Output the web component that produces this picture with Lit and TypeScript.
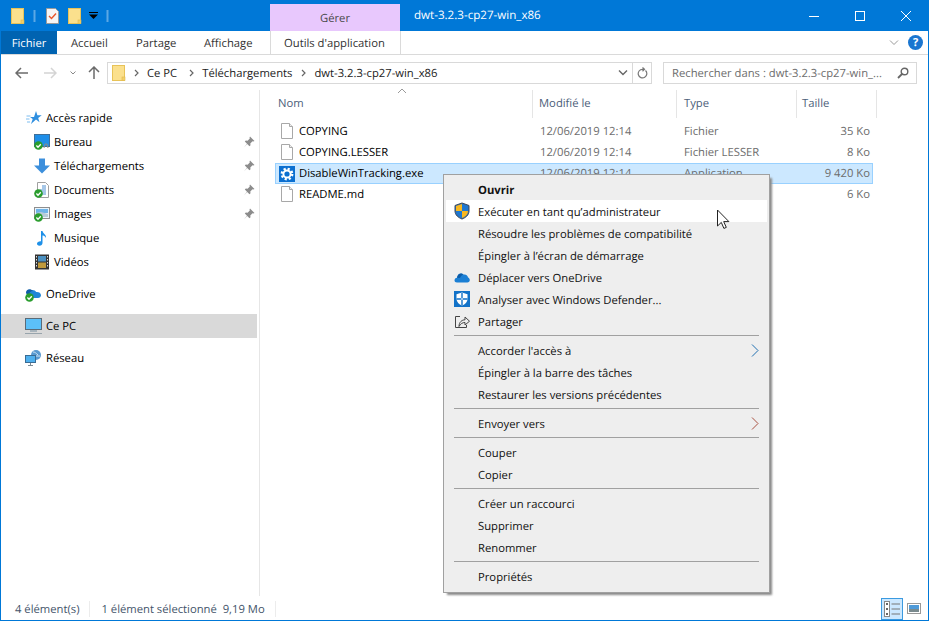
import { LitElement, css, html, nothing, svg } from "lit";
import { customElement } from "lit/decorators.js";

const folder = html`<svg width="14" height="16" viewBox="0 0 14 16">
  <rect x="0.5" y="0.5" width="12" height="15" fill="#fbe08d" stroke="#e8c358"></rect>
  <rect x="10" y="12" width="3" height="3.5" fill="#f3d06a" stroke="#e0b94c" stroke-width="0.6"></rect>
</svg>`;

const checkBadge = svg`<circle cx="4.5" cy="11.5" r="4.3" fill="#2a9d2e"></circle>
  <path d="M2.4 11.5l1.6 1.7 2.8-3" fill="none" stroke="#fff" stroke-width="1.3"></path>`;

const pageIcon = html`<svg width="16" height="18" viewBox="0 0 16 18">
  <path d="M2.5 0.5h8l3 3v12h-11z" fill="#fff" stroke="#a8a8a8"></path>
  <path d="M10.5 0.5v3h3" fill="#eee" stroke="#a8a8a8"></path>
</svg>`;

const gearIcon = html`<svg width="16" height="16" viewBox="0 0 16 16">
  <rect width="16" height="16" fill="#0b6fd0"></rect>
  <circle cx="8" cy="8" r="5.2" fill="none" stroke="#fff" stroke-width="2.4" stroke-dasharray="2.1 1.99"></circle>
  <circle cx="8" cy="8" r="3.6" fill="none" stroke="#fff" stroke-width="2"></circle>
</svg>`;

const pin = html`<svg width="12" height="12" viewBox="0 0 12 12">
  <path d="M7 0.5l4.5 4.5-1.2.6-0.8-.3-2.2 2.2.2 1.8-1 1-2.3-2.4-3.4 3.6 3.2-3.8-2.2-2.2 1-1 1.8.2 2.2-2.2-.3-.8z" fill="#8c8c8c"></path>
</svg>`;

const navIcons: Record<string, unknown> = {
  star: html`<svg width="16" height="16" viewBox="0 0 16 16">
    <path d="M10 1l1.4 4.2 4.3.1-3.5 2.6 1.3 4.3L10 9.6 5 14l1.7-5L4 7l4 0z" fill="#2f8fe0"></path>
    <path d="M0.5 6h4M0 9h3.5M1 12h3" stroke="#7dbdf0"></path>
  </svg>`,
  desktop: html`<svg width="16" height="16" viewBox="0 0 16 16">
    <rect x="0.5" y="0.5" width="15" height="12" fill="#1e8ee8" stroke="#3f6f98"></rect>
    <path d="M10 14l1-4h2l1 4" fill="none" stroke="#8a8a8a"></path>
    ${checkBadge}
  </svg>`,
  download: html`<svg width="16" height="16" viewBox="0 0 16 16">
    <path d="M5 0.5h6v7h5L8 15.5 0 7.500h5z" fill="#3c8fdc"></path>
  </svg>`,
  docs: html`<svg width="16" height="16" viewBox="0 0 16 16">
    <path d="M3.500 0.500h8l3 3v12h-11z" fill="#fff" stroke="#a0a0a0"></path>
    <path d="M8 4h4M8 6h4M6 8h6M8 10h4M8 12h4" stroke="#4f8fd0"></path>
    ${checkBadge}
  </svg>`,
  images: html`<svg width="16" height="16" viewBox="0 0 16 16">
    <rect x="0.500" y="1.500" width="15" height="11" fill="#eaf4fb" stroke="#8e8e8e"></rect>
    <rect x="2" y="3" width="12" height="4" fill="#6fb4e8"></rect>
    <path d="M2 7l5-1 7 2v3H2z" fill="#b8cbd8"></path>
    ${checkBadge}
  </svg>`,
  music: html`<svg width="16" height="16" viewBox="0 0 16 16">
    <path d="M7 1h1.500c.5 3 4 3.500 3.500 7-1-2-2.500-2.500-3.500-2.500V13c0 1.500-1.300 2.700-3 2.700S3 14.800 3 13.500 4.800 11 7 11.200z" fill="#1e90e8"></path>
  </svg>`,
  video: html`<svg width="16" height="16" viewBox="0 0 16 16">
    <rect x="1" y="0.500" width="14" height="15" fill="#333"></rect>
    <rect x="4" y="2" width="8" height="5.500" fill="#4a8fc0"></rect>
    <rect x="4" y="8.500" width="8" height="5.500" fill="#c09a3c"></rect>
    <path d="M2.500 2v12M13.500 2v12" stroke="#ddd" stroke-dasharray="1.500 1.500"></path>
  </svg>`,
  onedrive: html`<svg width="17" height="16" viewBox="0 0 17 16">
    <path d="M3 9c0-3 2-5 4.500-5 1.700 0 3 .8 3.700 2 2.500-.3 4.800 1 4.800 3.200 0 1.600-1.300 2.800-3 2.800H5C3.500 12 3 10.500 3 9z" fill="#1f86d8"></path>
    <path d="M1 6.500C1 4 3.500 2.500 6 3.500l2 1.500C5.500 5 4.500 6.500 4 8.500H2C1.300 8 1 7.300 1 6.500z" fill="#0f5da8"></path>
    ${checkBadge}
  </svg>`,
  pc: html`<svg width="17" height="16" viewBox="0 0 17 16">
    <rect x="0.500" y="0.500" width="16" height="11" fill="#5cc0f8" stroke="#5a6b78"></rect>
    <path d="M5 13h7" stroke="#a8b4bc" stroke-width="2"></path>
    <path d="M0 15.500h17" stroke="#98a4ac"></path>
  </svg>`,
  network: html`<svg width="17" height="16" viewBox="0 0 17 16">
    <circle cx="11" cy="5" r="5" fill="#5a9ad0"></circle>
    <path d="M8 2c2 0 3 1 5 3M7 6h8" stroke="#cfe4f4" fill="none"></path>
    <rect x="0.500" y="5.500" width="10" height="7" fill="#4fb0ee" stroke="#3a6c94"></rect>
    <path d="M5.500 13v2M3 15.500h5" stroke="#7c8a94"></path>
  </svg>`
};

const uacShield = html`<svg width="18" height="18" viewBox="0 0 18 18">
  <path d="M9 1l7 2.500V9c0 4-3.500 6.800-7 8-3.500-1.200-7-4-7-8V3.500z" fill="#2f6fb8" stroke="#3b4a5e"></path>
  <path d="M9 2v7H3V4zM9 9h6c0 3.500-3 6-6 7z" fill="#f8b820"></path>
  <path d="M9 2l6 2v5H9zM9 9v7c-3-1-6-3.500-6-7z" fill="#1f78d0"></path>
</svg>`;

const cloudIcon = html`<svg width="16" height="12" viewBox="0 0 16 12">
  <path d="M0.500 9.500C0.500 8 1.500 7 3 6.800 3.500 3 7 1.500 9.500 3.500 12 3 14 4.500 14 6.500c1 .3 1.800 1.300 1.800 2.500 0 1.500-1 2.500-2.500 2.500H3c-1.500 0-2.500-.8-2.500-2z" fill="#1b7fd4"></path>
  <path d="M3 6.800C3.500 3 7 1.500 9.500 3.500 7.500 4 6.500 5.500 6 7z" fill="#0c5ca8"></path>
</svg>`;

const defenderIcon = html`<svg width="16" height="16" viewBox="0 0 16 16">
  <rect width="16" height="16" fill="#1272c8"></rect>
  <path d="M8 1.500l5.500 1.800V8c0 3-2.500 5.300-5.500 6.500C5 13.300 2.500 11 2.500 8V3.300z" fill="#fff"></path>
  <path d="M7.300 2v12.300h1.400V2zM2.500 7.300h11v1.400h-11z" fill="#1272c8"></path>
</svg>`;

const shareIcon = html`<svg width="16" height="16" viewBox="0 0 16 16">
  <path d="M5 13.500C5 9 8 6.800 11 6.800V4l4.500 4.200L11 12V9.500c-2.500 0-4.500 1.200-6 4z" fill="none" stroke="#444"></path>
  <path d="M6 3.500H1.500v11h11V12" fill="none" stroke="#444"></path>
</svg>`;

type NavRow = { label: string; icon: string; sub?: boolean; pin?: boolean; gap?: boolean; selected?: boolean };

const navRows: NavRow[] = [
  { label: "Accès rapide", icon: "star" },
  { label: "Bureau", icon: "desktop", sub: true, pin: true },
  { label: "Téléchargements", icon: "download", sub: true, pin: true },
  { label: "Documents", icon: "docs", sub: true, pin: true },
  { label: "Images", icon: "images", sub: true, pin: true },
  { label: "Musique", icon: "music", sub: true },
  { label: "Vidéos", icon: "video", sub: true },
  { label: "OneDrive", icon: "onedrive", gap: true },
  { label: "Ce PC", icon: "pc", gap: true, selected: true },
  { label: "Réseau", icon: "network", gap: true }
];

const files = [
  { name: "COPYING", date: "12/06/2019 12:14", type: "Fichier", size: "35 Ko" },
  { name: "COPYING.LESSER", date: "12/06/2019 12:14", type: "Fichier LESSER", size: "8 Ko" },
  { name: "DisableWinTracking.exe", date: "12/06/2019 12:14", type: "Application", size: "9 420 Ko", selected: true },
  { name: "README.md", date: "", type: "", size: "6 Ko" }
];

type MenuEntry = { label?: string; icon?: unknown; bold?: boolean; hot?: boolean; arrow?: string };

const menu: MenuEntry[] = [
  { label: "Ouvrir", bold: true },
  { label: "Exécuter en tant qu’administrateur", icon: uacShield, hot: true },
  { label: "Résoudre les problèmes de compatibilité" },
  { label: "Épingler à l’écran de démarrage" },
  { label: "Déplacer vers OneDrive", icon: cloudIcon },
  { label: "Analyser avec Windows Defender...", icon: defenderIcon },
  { label: "Partager", icon: shareIcon },
  {},
  { label: "Accorder l'accès à", arrow: "#1f6fb0" },
  { label: "Épingler à la barre des tâches" },
  { label: "Restaurer les versions précédentes" },
  {},
  { label: "Envoyer vers", arrow: "#a85040" },
  {},
  { label: "Couper" },
  { label: "Copier" },
  {},
  { label: "Créer un raccourci" },
  { label: "Supprimer" },
  { label: "Renommer" },
  {},
  { label: "Propriétés" }
];

@customElement("app-root")
export class AppRoot extends LitElement {
  static styles = css`
    :host {
      display: block;
      position: relative;
      box-sizing: border-box;
      width: 929px;
      height: 621px;
      overflow: hidden;
      background: #fff;
      border: 1px solid #0078d7;
      border-top: 0;
      font-family: "Open Sans", "Noto Sans", sans-serif;
      font-size: 11.25px;
      text-rendering: geometricPrecision;
      color: #000;
    }
    svg { display: block; flex: none; }
    .t { padding-top: 2px; }

    .title {
      display: flex;
      align-items: flex-start;
      height: 31px;
      margin: 0 -1px;
      background: #0078d7;
      color: #fff;
    }
    .quick { display: flex; align-items: center; width: 270px; height: 31px; padding-left: 11px; box-sizing: border-box; }
    .qsep { width: 1px; height: 12px; margin: 0 10px 0 8px; background: #5aa9e6; border: 1px solid #2f8fdd; border-width: 0 1px; }
    .qsep.last { margin: 0 0 0 8px; }
    .doc { margin-right: 9px; }
    .drop { margin-left: 7px; }
    .manage {
      width: 130px;
      height: 27px;
      margin-top: 4px;
      background: #e8c8fd;
      color: #4a4a4a;
      text-align: center;
      line-height: 30px;
      box-sizing: border-box;
    }
    .wintitle { flex: 1; padding-left: 14px; font-size: 11.6px; line-height: 31px; }
    .controls { display: flex; width: 138px; height: 31px; align-items: center; }
    .controls span { display: flex; justify-content: center; width: 46px; }

    .tabs {
      display: flex;
      align-items: center;
      height: 23px;
      border-bottom: 1px solid #dadada;
      color: #333;
    }
    .fichier {
      width: 56px;
      height: 23px;
      background: #0063b1;
      color: #fff;
      line-height: 25px;
      text-align: center;
    }
    .tab { padding-left: 14px; line-height: 25px; height: 23px; }
    .tab.accueil { width: 51px; }
    .tab.partage { width: 54px; }
    .tab.affichage { width: 66px; }
    .tool {
      width: 131px;
      height: 23px;
      box-sizing: border-box;
      padding-left: 13px;
      line-height: 25px;
      border: 1px solid #dadada;
      border-width: 0 1px;
    }
    .tabend { flex: 1; }
    .tabicons { display: flex; align-items: center; gap: 9px; padding-right: 5px; }
    .help {
      width: 15px;
      height: 15px;
      border-radius: 50%;
      background: #1a76d0;
      color: #fff;
      font-size: 11px;
      font-weight: 700;
      line-height: 15px;
      text-align: center;
    }

    .addr { display: flex; align-items: center; height: 35px; }
    .nav-btns { display: flex; align-items: center; width: 106px; padding-left: 14px; box-sizing: border-box; }
    .fwd { margin-left: 16px; }
    .hist { margin-left: 13px; }
    .up { margin-left: 12px; }
    .pathfolder { margin-left: 4px; }
    .pathbox {
      display: flex;
      align-items: center;
      box-sizing: border-box;
      width: 545px;
      height: 22px;
      border: 1px solid #d9d9d9;
      color: #222;
    }
    .crumbs { display: flex; flex: 1; align-items: center; }
    .crumb { display: flex; align-items: center; gap: 8px; padding-left: 9px; }
    .crumb:first-child { padding-left: 8px; }
    .crumb:nth-child(2) { padding-left: 12px; }
    .pathbtn { display: flex; align-items: center; justify-content: center; width: 18px; height: 20px; }
    .pathbtn.refresh { border-left: 1px solid #d9d9d9; }
    .searchbox {
      display: flex;
      align-items: center;
      justify-content: space-between;
      box-sizing: border-box;
      width: 254px;
      height: 22px;
      margin-left: 11px;
      padding: 0 7px 0 8px;
      border: 1px solid #d9d9d9;
      color: #6d6d6d;
    }

    .body { display: flex; height: 506px; }
    .nav { width: 258px; padding-top: 16px; border-right: 1px solid #e6e6e6; flex: none; }
    .nrow { display: flex; align-items: center; height: 24px; margin-right: 2px; padding-left: 24px; }
    .nrow.sub { padding-left: 32px; }
    .nrow.gap { margin-top: 8px; }
    .nrow.selected { background: #d9d9d9; }
    .nicon { display: flex; justify-content: center; width: 17px; margin-right: 4px; }
    .nlabel { flex: 1; }
    .npin { margin-right: 2px; }

    .main { flex: 1; padding-left: 15px; }
    .cols { display: grid; grid-template-columns: 258px 144px 120px 80px; height: 24px; position: relative; }
    .cols div { border-right: 1px solid #e5e5e5; color: #4c607a; padding-left: 3px; line-height: 28px; }
    .cols div + div { padding-left: 5px; }
    .cols div:nth-child(2) { padding-left: 6px; }
    .cols div:nth-child(3) { padding-left: 7px; }
    .sort { position: absolute; left: 122px; top: -2px; }
    .rows { padding-top: 7px; width: 598px; }
    .frow {
      display: grid;
      grid-template-columns: 258px 150px 112px 1fr;
      align-items: center;
      box-sizing: border-box;
      height: 21px;
      border: 1px solid transparent;
      color: #6d6d6d;
    }
    .frow.selected { background: #cce8ff; border-color: #99d1ff; }
    .fname { display: flex; align-items: center; gap: 4px; padding-left: 3px; color: #000; }
    .fdate { padding-left: 6px; }
    .fsize { text-align: right; padding-right: 2px; }

    .status {
      display: flex;
      align-items: center;
      height: 23px;
      margin-top: 1px;
      color: #44546a;
    }
    .sitem { padding: 0 10px 0 11px; height: 16px; line-height: 17px; border-right: 1px solid #ececec; }
    .sitem:first-child { padding-left: 14px; }
    .sspan { flex: 1; }
    .views { display: flex; align-items: center; padding-right: 3px; }
    .view { display: flex; align-items: center; justify-content: center; width: 22px; height: 22px; box-sizing: border-box; }
    .view.on { background: #cce8ff; border: 1px solid #3b9ae0; }

    .menu {
      position: absolute;
      left: 442px;
      top: 174px;
      width: 327px;
      box-sizing: border-box;
      padding: 3px 2px 5px;
      background: #eeeeee;
      border: 1px solid #a0a0a0;
      box-shadow: 3px 3px 2px -1px #8a8a8a;
      color: #111;
    }
    .mi { display: flex; align-items: center; height: 22px; }
    .mi.hot { background: #fff; }
    .mi.bold { font-weight: 700; }
    .micon { display: flex; align-items: center; justify-content: center; width: 16px; margin: 0 8px; }
    .mlabel { flex: 1; padding-top: 2px; }
    .marrow { margin-right: 8px; }
    .msep { height: 7px; display: flex; align-items: center; padding: 0 8px; }
    .msep i { display: block; flex: 1; height: 1px; background: #a0a0a0; }
    .cursor { position: absolute; left: 715px; top: 209px; }
  `;

  private renderNavRow(row: NavRow) {
    const cls = ["nrow", row.sub ? "sub" : "", row.gap ? "gap" : "", row.selected ? "selected" : ""].join(" ");
    return html`<div class=${cls}>
      <span class="nicon">${navIcons[row.icon]}</span>
      <span class="nlabel">${row.label}</span>
      ${row.pin ? html`<span class="npin">${pin}</span>` : nothing}
    </div>`;
  }

  private renderMenuEntry(entry: MenuEntry) {
    if (!entry.label) {
      return html`<div class="msep"><i></i></div>`;
    }
    const cls = `mi ${entry.bold ? "bold" : ""} ${entry.hot ? "hot" : ""}`;
    return html`<div class=${cls}>
      <span class="micon">${entry.icon ?? nothing}</span>
      <span class="mlabel">${entry.label}</span>
      ${entry.arrow
        ? html`<svg class="marrow" width="8" height="13" viewBox="0 0 8 13"><path d="M1 0.500l6 6-6 6" fill="none" stroke=${entry.arrow}></path></svg>`
        : nothing}
    </div>`;
  }

  protected render() {
    const chevron = html`<svg width="5" height="8" viewBox="0 0 5 8"><path d="M1 1l3 3-3 3" fill="none" stroke="#666" stroke-width="1.200"></path></svg>`;
    return html`
      <div class="title">
        <div class="quick">
          ${folder}
          <span class="qsep"></span>
          <svg class="doc" width="13" height="16" viewBox="0 0 13 16">
            <path d="M0.500 0.500h9l3 3v12H0.500z" fill="#f5f5f5" stroke="#9a9a9a"></path>
            <path d="M3 8l2.500 2.500L10 5.500" fill="none" stroke="#e8552a" stroke-width="1.400"></path>
          </svg>
          ${folder}
          <svg class="drop" width="9" height="7" viewBox="0 0 9 7">
            <path d="M0 0h9v1H0zM0 2.500h9L4.500 7z" fill="#000"></path>
          </svg>
          <span class="qsep last"></span>
        </div>
        <div class="manage">Gérer</div>
        <div class="wintitle">dwt-3.2.3-cp27-win_x86</div>
        <div class="controls">
          <span><svg width="10" height="10" viewBox="0 0 10 10"><path d="M0 5.500h10" stroke="#fff"></path></svg></span>
          <span><svg width="10" height="10" viewBox="0 0 10 10"><rect x="0.500" y="0.500" width="9" height="9" fill="none" stroke="#fff"></rect></svg></span>
          <span><svg width="10" height="10" viewBox="0 0 10 10"><path d="M0 0l10 10M10 0L0 10" stroke="#fff"></path></svg></span>
        </div>
      </div>

      <div class="tabs">
        <div class="fichier">Fichier</div>
        <div class="tab accueil">Accueil</div>
        <div class="tab partage">Partage</div>
        <div class="tab affichage">Affichage</div>
        <div class="tool">Outils d'application</div>
        <div class="tabend"></div>
        <div class="tabicons">
          <svg width="10" height="6" viewBox="0 0 10 6"><path d="M1 0.500l4 4 4-4" fill="none" stroke="#999"></path></svg>
          <div class="help">?</div>
        </div>
      </div>

      <div class="addr">
        <div class="nav-btns">
          <svg width="13" height="12" viewBox="0 0 13 12"><path d="M6 1L1 6l5 5M1 6h12" fill="none" stroke="#6b6b6b" stroke-width="1.500"></path></svg>
          <svg class="fwd" width="13" height="12" viewBox="0 0 13 12"><path d="M7 1l5 5-5 5M12 6H0" fill="none" stroke="#d4d4d4" stroke-width="1.500"></path></svg>
          <svg class="hist" width="6" height="4" viewBox="0 0 6 4"><path d="M0.500 0.500L3 3l2.500-2.500" fill="none" stroke="#888"></path></svg>
          <svg class="up" width="12" height="13" viewBox="0 0 12 13"><path d="M1 6l5-5 5 5M6 1v12" fill="none" stroke="#6b6b6b" stroke-width="1.500"></path></svg>
        </div>
        <div class="pathbox">
          <span class="pathfolder">${folder}</span>
          <div class="crumbs">
            <span class="crumb">${chevron}<span class="t">Ce PC</span></span>
            <span class="crumb">${chevron}<span class="t">Téléchargements</span></span>
            <span class="crumb">${chevron}<span class="t">dwt-3.2.3-cp27-win_x86</span></span>
          </div>
          <span class="pathbtn"><svg width="10" height="6" viewBox="0 0 10 6"><path d="M1 0.500l4 4 4-4" fill="none" stroke="#666" stroke-width="1.400"></path></svg></span>
          <span class="pathbtn refresh"><svg width="11" height="12" viewBox="0 0 11 12"><path d="M8.500 3.500a4.300 4.300 0 1 1-3-1.200H7M5.500 0.500L7.500 2.300 5.500 4.200" fill="none" stroke="#777" stroke-width="1.200"></path></svg></span>
        </div>
        <div class="searchbox">
          <span class="t">Rechercher dans : dwt-3.2.3-cp27-win_...</span>
          <svg width="12" height="12" viewBox="0 0 12 12"><circle cx="7.500" cy="4.500" r="3.300" fill="none" stroke="#666" stroke-width="1.400"></circle><path d="M5 7L1 11" stroke="#666" stroke-width="1.800"></path></svg>
        </div>
      </div>

      <div class="body">
        <div class="nav">${navRows.map((row) => this.renderNavRow(row))}</div>
        <div class="main">
          <div class="cols">
            <div>Nom</div><div>Modifié le</div><div>Type</div><div>Taille</div>
            <svg class="sort" width="10" height="6" viewBox="0 0 10 6"><path d="M1 5l4-4 4 4" fill="none" stroke="#9a9a9a"></path></svg>
          </div>
          <div class="rows">
            ${files.map((file) => html`<div class="frow ${file.selected ? "selected" : ""}">
              <span class="fname">${file.selected ? gearIcon : pageIcon}<span>${file.name}</span></span>
              <span class="fdate">${file.date}</span>
              <span>${file.type}</span>
              <span class="fsize">${file.size}</span>
            </div>`)}
          </div>
        </div>
      </div>

      <div class="status">
        <span class="sitem">4 élément(s)</span>
        <span class="sitem">1 élément sélectionné&nbsp;&nbsp;9,19 Mo</span>
        <span class="sspan"></span>
        <div class="views">
          <span class="view on"><svg width="16" height="16" viewBox="0 0 16 16">
            <rect x="0.500" y="0.500" width="5" height="15" fill="#fff" stroke="#888"></rect>
            <path d="M2 3h2M2 8h2M2 13h2" stroke="#666" stroke-width="2"></path>
            <path d="M7.500 3H16M7.500 8H16M7.500 13H16" stroke="#777" stroke-width="1.200"></path>
          </svg></span>
          <span class="view"><svg width="14" height="11" viewBox="0 0 14 11">
            <rect x="0.500" y="0.500" width="13" height="10" fill="#fff" stroke="#999"></rect>
            <rect x="2" y="2" width="10" height="4" fill="#4f9ad8"></rect>
            <rect x="2" y="6" width="10" height="3" fill="#7a8a8e"></rect>
          </svg></span>
        </div>
      </div>

      <div class="menu">${menu.map((entry) => this.renderMenuEntry(entry))}</div>
      <svg class="cursor" width="14" height="22" viewBox="0 0 14 22">
        <path d="M1.500 1v16l3.800-3.600 2.600 6 2.400-1-2.600-5.800h5.200z" fill="#fff" stroke="#222"></path>
      </svg>
    `;
  }
}
